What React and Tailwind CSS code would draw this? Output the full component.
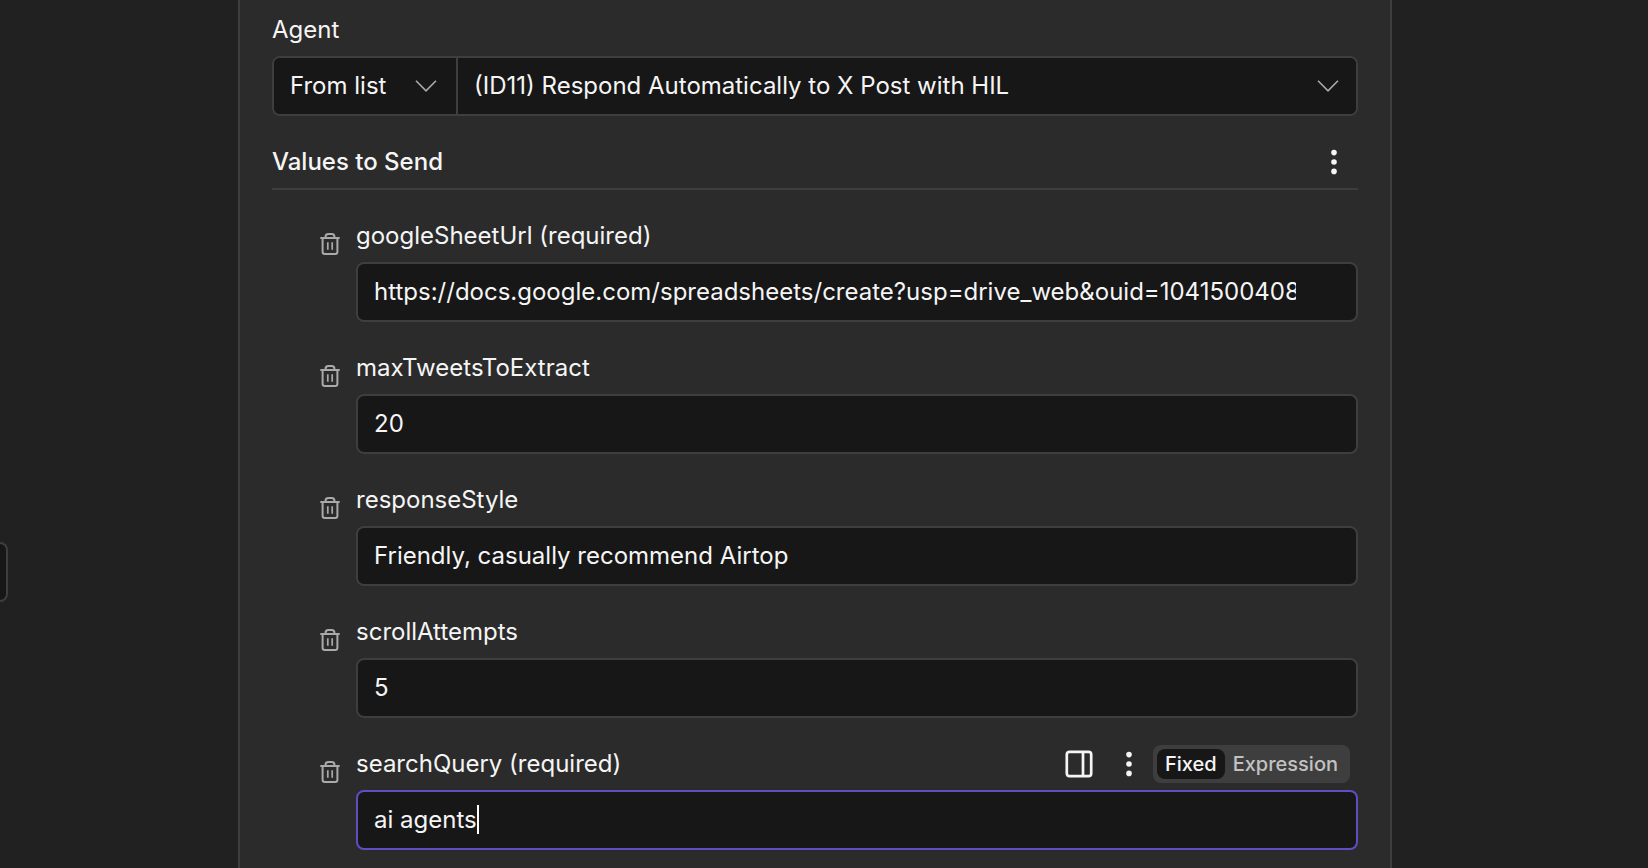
import React, { useState } from 'react';

const AGENTS = ['(ID11) Respond Automatically to X Post with HIL'];

const FIELDS = [
    {
        id: 'googleSheetUrl',
        required: true,
        value: 'https://docs.google.com/spreadsheets/create?usp=drive_web&ouid=1041500408',
    },
    { id: 'maxTweetsToExtract', value: '20' },
    { id: 'responseStyle', value: 'Friendly, casually recommend Airtop' },
    { id: 'scrollAttempts', value: '5' },
    { id: 'searchQuery', required: true, value: 'ai agents' },
];

const ChevronIcon = ({ className }) => (
    <svg className={className} width="22" height="12" viewBox="0 0 22 12" fill="none" stroke="currentColor" strokeWidth="1.6">
        <path d="M1 0.8l10 10L21 0.8" />
    </svg>
);

const DotsIcon = () => (
    <svg width="8" height="26" viewBox="0 0 8 26" fill="currentColor">
        <circle cx="4" cy="3.6" r="2.8" />
        <circle cx="4" cy="13" r="2.8" />
        <circle cx="4" cy="22.4" r="2.8" />
    </svg>
);

const TrashIcon = () => (
    <svg width="20" height="24" viewBox="0 0 20 24" fill="none" stroke="currentColor" strokeWidth="2">
        <path d="M0.3 6h19.4" />
        <path d="M5.6 5.8V4.6q0-2.6 2.6-2.6h3.6q2.6 0 2.6 2.6v1.2" />
        <path d="M2.6 6v13.8q0 2.2 2.2 2.2h10.4q2.2 0 2.2-2.2V6" />
        <path d="M7.8 10.2v7.6M12.2 10.2v7.6" strokeWidth="1.7" />
    </svg>
);

const PanelIcon = () => (
    <svg width="28" height="28" viewBox="0 0 28 28" fill="none" stroke="currentColor" strokeWidth="2.7">
        <rect x="1.8" y="1.8" width="24.4" height="24.4" rx="2.6" />
        <path d="M18 1.8v24.4" />
    </svg>
);

const FieldActions = () => {
    const [mode, setMode] = useState('Fixed');

    return (
        <div className="flex items-center pr-2">
            <button type="button" aria-label="Open side panel" className="mr-8">
                <PanelIcon />
            </button>
            <button type="button" aria-label="Field options" className="mr-5">
                <DotsIcon />
            </button>
            <div className="flex rounded-lg bg-[#3e3e3e] p-1">
                {['Fixed', 'Expression'].map((name) => (
                    <button
                        key={name}
                        type="button"
                        aria-pressed={mode === name}
                        onClick={() => setMode(name)}
                        className={`h-[30px] rounded-lg px-2 text-xl leading-[30px] font-medium ${
                            mode === name ? 'bg-[#171717] text-[#f5f5f5]' : 'text-[#c2c2c2]'
                        }`}
                    >
                        {name}
                    </button>
                ))}
            </div>
        </div>
    );
};

const Field = ({ field, active }) => {
    const [value, setValue] = useState(field.value);

    return (
        <div className="flex gap-4 pl-12">
            <button type="button" aria-label={`Delete ${field.id}`} className="mt-4 self-start text-[#aaaaaa]">
                <TrashIcon />
            </button>
            <div className="min-w-0 flex-1">
                <div className="mb-1.5 flex h-10 items-center justify-between">
                    <label htmlFor={field.id}>
                        {field.id}
                        {field.required && ' (required)'}
                    </label>
                    {active && <FieldActions />}
                </div>
                <div
                    className={`flex h-[60px] items-center rounded-lg border-2 bg-[#171717] pr-[60px] pb-0.5 pl-4 ${
                        active ? 'border-[#5d4ec4]' : 'border-[#3e3e3e]'
                    }`}
                >
                    <input
                        id={field.id}
                        type="text"
                        value={value}
                        onChange={(e) => setValue(e.target.value)}
                        className={`h-full min-w-0 bg-transparent outline-none ${
                            active ? 'field-sizing-content caret-transparent' : 'w-full'
                        }`}
                    />
                    {/* Text cursor */}
                    {active && <span className="h-[29px] w-0.5 shrink-0 bg-white" />}
                </div>
            </div>
        </div>
    );
};

export default function App() {
    return (
        <div className="flex min-h-screen overflow-hidden bg-[#212121] font-['Inter',sans-serif] text-2xl leading-8 text-[#f5f5f5]">
            {/* Edge of the input pane */}
            <aside className="w-[238px] shrink-0 pt-[542px]">
                <div className="h-[60px] w-2 rounded-r-lg border-2 border-l-0 border-[#3e3e3e] bg-[#171717]" />
            </aside>

            <main className="min-w-0 flex-1 border-x-2 border-[#3e3e3e] bg-[#2b2b2b] px-8 pt-2.5 pb-4">
                <label htmlFor="agent" className="mb-1.5 flex h-10 items-center">
                    Agent
                </label>
                <div className="flex h-[60px] overflow-hidden rounded-lg border-2 border-[#3e3e3e] bg-[#171717]">
                    <div className="relative w-[184px] shrink-0 border-r-2 border-[#3e3e3e]">
                        <select aria-label="Agent source" className="h-full w-full appearance-none bg-[#171717] pl-4 outline-none">
                            <option>From list</option>
                        </select>
                        <ChevronIcon className="pointer-events-none absolute top-[22px] right-[19px] text-[#aaaaaa]" />
                    </div>
                    <div className="relative min-w-0 flex-1">
                        <select id="agent" className="h-full w-full appearance-none bg-[#171717] pr-12 pl-4 outline-none">
                            {AGENTS.map((agent) => (
                                <option key={agent}>{agent}</option>
                            ))}
                        </select>
                        <ChevronIcon className="pointer-events-none absolute top-[22px] right-[17px] text-[#aaaaaa]" />
                    </div>
                </div>

                <div className="mt-[26px] flex items-center justify-between border-b-2 border-[#3e3e3e] pr-5 pb-1.5">
                    <h2 className="h-10 leading-10 font-medium">Values to Send</h2>
                    <button type="button" aria-label="Values options">
                        <DotsIcon />
                    </button>
                </div>

                <div className="mt-[26px] flex flex-col gap-[26px]">
                    {FIELDS.map((field) => (
                        <Field key={field.id} field={field} active={field.id === 'searchQuery'} />
                    ))}
                </div>
            </main>

            <aside className="w-64 shrink-0" />
        </div>
    );
}
